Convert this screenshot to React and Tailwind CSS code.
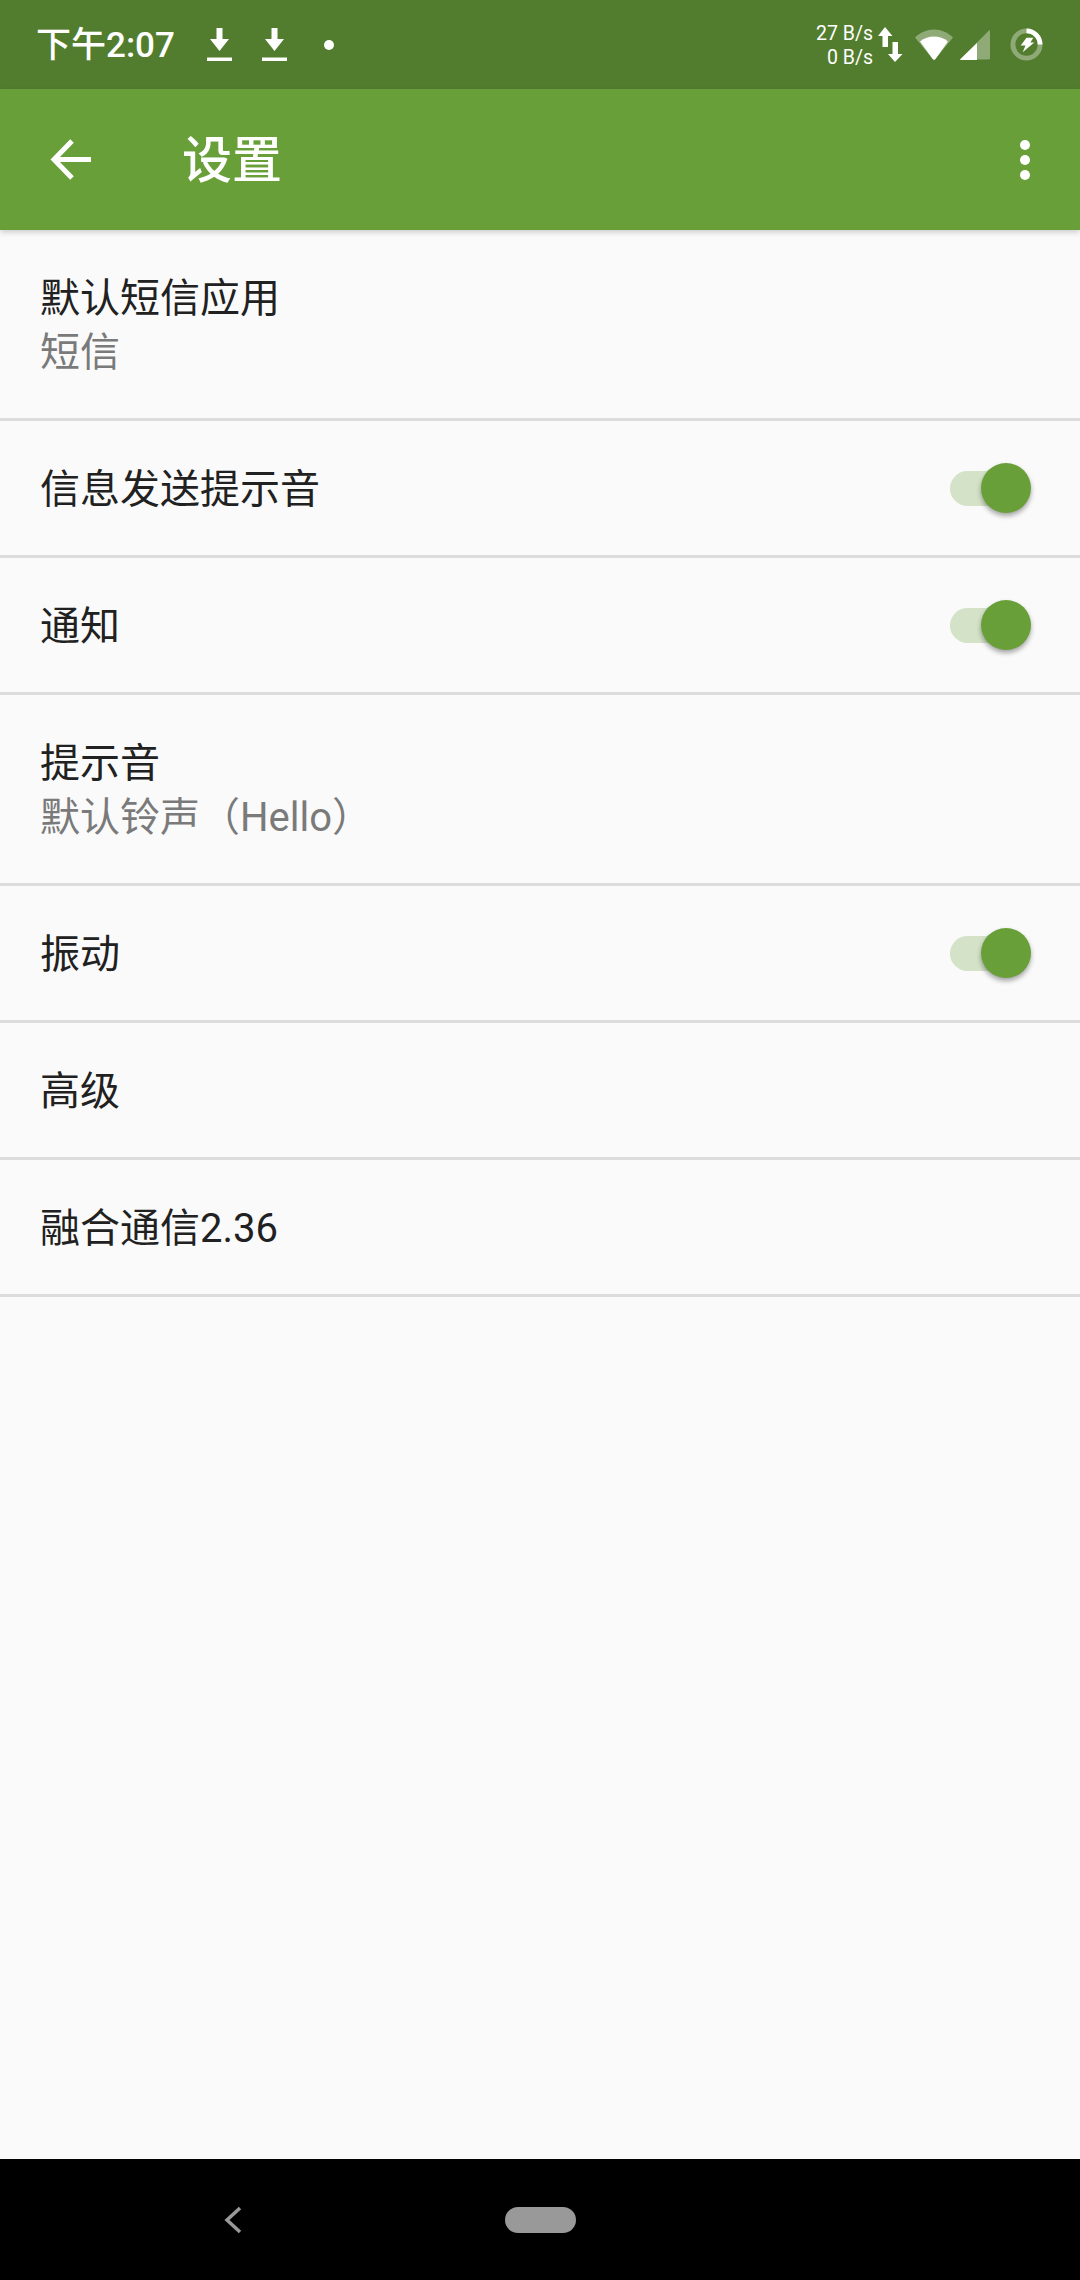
const fontStack = 'font-["Roboto","Noto_Sans_CJK_SC",sans-serif]';

function DownloadIcon() {
  return (
    <svg width="25" height="33" viewBox="0 0 25 33" fill="white">
      <path d="M9.500 0h6v11H22L12.500 23 3 11h6.500z" />
      <rect x="0" y="29.500" width="25" height="3.500" />
    </svg>
  );
}

function NetArrows() {
  return (
    <svg width="25" height="35" viewBox="0 0 25 35" fill="white">
      <path d="M7 0 14.500 9H10v11H4.500V9H0z" />
      <path d="M14.500 15H20v12h4.500L17 35 10 27h4.500z" />
    </svg>
  );
}

function WifiIcon() {
  return (
    <svg width="38" height="32" viewBox="0 0 38 32" fill="white">
      <path d="M0 8.500C5 3.500 12 0.500 19 0.500s14 3 19 8L19 31.500z" opacity="0.35" />
      <path d="M5 12.500C9 9 14 7.500 19 7.500s10 1.500 14 5L20.500 30c-.8 1-2 1-2.800 0z" />
    </svg>
  );
}

function SignalIcon() {
  return (
    <svg width="30" height="30" viewBox="0 0 30 30" fill="white">
      <path d="M29 0.500c.6-.5 1-.2 1 .5v27c0 1-.5 1.500-1.500 1.500H0z" opacity="0.35" />
      <path d="M17 13v17H1c-1 0-1-.5-.5-1z" />
    </svg>
  );
}

function BatteryIcon() {
  return (
    <svg width="33" height="33" viewBox="0 0 34 34" fill="none">
      <circle cx="17" cy="17" r="14" stroke="white" strokeWidth="5" opacity="0.35" />
      <path d="M17 3a14 14 0 0 1 14 14" stroke="white" strokeWidth="5" />
      <path d="M17 10h7l-3 5h4L13 25l3-7h-5z" fill="white" />
    </svg>
  );
}

function StatusBar() {
  return (
    <div className="h-[89px] bg-[#537d2e] flex items-center text-white shrink-0">
      <span className="ml-[36px] mt-[2px] text-[35px] font-medium leading-none w-[136px] whitespace-nowrap">下午2:07</span>
      <div className="ml-[35px] flex items-center gap-[30px]">
        <DownloadIcon />
        <DownloadIcon />
      </div>
      <div className="ml-[37px] w-[10px] h-[10px] rounded-full bg-white" />
      <div className="ml-auto mr-[37px] flex items-center">
        <div className="text-[19.500px] leading-[24px] text-right mr-[5px] mt-[2px]">
          <div>27 B/s</div>
          <div>0 B/s</div>
        </div>
        <NetArrows />
        <div className="ml-[12px]"><WifiIcon /></div>
        <div className="ml-[7px]"><SignalIcon /></div>
        <div className="ml-[20px]"><BatteryIcon /></div>
      </div>
    </div>
  );
}

function Toolbar() {
  return (
    <div className="relative z-10 h-[141px] bg-[#689f38] flex items-center text-white shrink-0 shadow-[0_2px_6px_rgba(0,0,0,0.2)]">
      <svg className="ml-[50px]" width="42" height="42" viewBox="0 0 42 42" fill="none" stroke="white" strokeWidth="5">
        <path d="M41 20.500H5M22 2 4 20.500 22 39" />
      </svg>
      <span className="ml-[90px] mt-[2px] text-[50px] font-medium leading-none">设置</span>
      <div className="ml-auto mr-[50px] flex flex-col gap-[5px]">
        <div className="w-[10px] h-[10px] rounded-full bg-white" />
        <div className="w-[10px] h-[10px] rounded-full bg-white" />
        <div className="w-[10px] h-[10px] rounded-full bg-white" />
      </div>
    </div>
  );
}

function Toggle() {
  return (
    <div className="relative w-[82px] h-[50px] mr-[48px]">
      <div className="absolute left-0 top-[8px] w-[70px] h-[35px] rounded-full bg-[#d4e2c7]" />
      <div className="absolute left-[31px] top-0 w-[50px] h-[50px] rounded-full bg-[#689f38] shadow-[0_3px_5px_rgba(0,0,0,0.35)]" />
    </div>
  );
}

function Row({ title, subtitle, toggle }) {
  return (
    <div className={`flex items-center justify-between pl-[40px] border-b-[3px] border-[#dcdcdc] ${subtitle ? 'h-[191px]' : 'h-[137px]'}`}>
      <div className="pt-[3px]">
        <div className="text-[40px] leading-[53px] text-[#212121]">{title}</div>
        {subtitle && <div className="mt-[1px] text-[40px] leading-[53px] text-[#7a7a7a]">{subtitle}</div>}
      </div>
      {toggle && <Toggle />}
    </div>
  );
}

export default function App() {
  return (
    <div className={`w-[1080px] h-[2280px] flex flex-col bg-[#fafafa] overflow-hidden ${fontStack}`}>
      <StatusBar />
      <Toolbar />
      <div className="flex-1">
        <Row title="默认短信应用" subtitle="短信" />
        <Row title="信息发送提示音" toggle />
        <Row title="通知" toggle />
        <Row title="提示音" subtitle="默认铃声（Hello）" />
        <Row title="振动" toggle />
        <Row title="高级" />
        <Row title="融合通信2.36" />
      </div>
      <div className="relative h-[121px] bg-black shrink-0 flex items-center justify-center">
        <svg className="absolute left-[224px] top-[47px]" width="18" height="28" viewBox="0 0 18 28" fill="none" stroke="#999999" strokeWidth="3.500">
          <path d="M16 2 3 14l13 12" />
        </svg>
        <div className="w-[71px] h-[26px] rounded-full bg-[#999999]" />
      </div>
    </div>
  );
}
